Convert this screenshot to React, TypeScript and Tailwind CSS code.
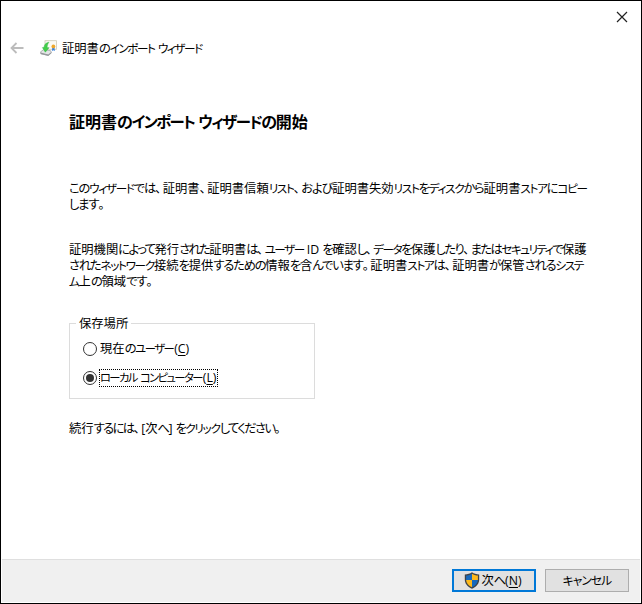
import React, { useState } from 'react';

type StoreLocation = 'user' | 'machine';

interface JaTextProps {
  text: string;
  hiragana?: string;
  katakana?: string;
  punctuation?: string;
}

interface LocationOptionProps {
  label: string;
  accessKey: string;
  checked: boolean;
  katakana: string;
  onSelect: () => void;
}

// Kana runs are set tighter than kanji, as in a UI typeface.
const JaText: React.FC<JaTextProps> = ({
  text,
  hiragana = 'tracking-[-1.2px]',
  katakana = 'text-[11.6px] tracking-[-1.3px]',
  punctuation = 'tracking-[1.5px]',
}) => (
  <>
    {text.split(/([\u3041-\u309f]+|[\u30a0-\u30ff]+|[\u3001\u3002])/).map((run, index) => {
      const style = /^[\u3041-\u309f]/.test(run)
        ? hiragana
        : /^[\u30a0-\u30ff]/.test(run)
          ? katakana
          : /^[\u3001\u3002]/.test(run)
            ? punctuation
            : '';

      return (
        <span key={index} className={style}>
          {run}
        </span>
      );
    })}
  </>
);

const CertificateIcon: React.FC = () => (
  <svg width="17" height="17" viewBox="0 0 17 17" aria-hidden="true">
    <rect x="5" y="0.7" width="11.4" height="8.6" fill="#fbfaf4" stroke="#cdc8b5" strokeWidth="0.8" />
    <path d="M12.3 7.500l-.4 3.600 1.500-.9 1.500.9-.4-3.600z" fill="#3b83dd" />
    <circle cx="13.4" cy="6.4" r="1.900" fill="#efa72b" />
    <path d="M.6 11.800l3-2.100 7 1 .8 1.600-3 3-7.700-1.500z" fill="#e3e5e6" stroke="#8b8f92" strokeWidth="0.6" />
    <path d="M.8 12.400v1.700l7.500 2 3.100-2.900v-1.200l-3.100 2.600z" fill="#96999c" />
    <path d="M9 2.200c-2.900.5-4.700 2-4.900 5L2.400 7.600l2.900 4.600 3.800-4.500-2-.2c.1-2.200.8-3.900 1.900-5.300z" fill="#43ce4a" stroke="#2db13f" strokeWidth="0.4" />
  </svg>
);

const ShieldIcon: React.FC = () => (
  <svg width="16" height="17" viewBox="0 0 16 17" className="shrink-0" aria-hidden="true">
    <path d="M8 .3C6 1.700 3.600 2.300.8 2.400v5.100c0 4.100 2.500 7.100 7.200 9.300 4.700-2.200 7.200-5.200 7.200-9.300V2.400C12.400 2.300 10 1.700 8 .3z" fill="#3f4347" />
    <path d="M8 1.800v6.200H2.100V3.600C4.300 3.500 6.300 2.900 8 1.800z" fill="#1769bd" />
    <path d="M8 1.800v6.200h5.900V3.600C11.700 3.500 9.700 2.900 8 1.800z" fill="#fdb91c" />
    <path d="M2.100 8H8v7.300C4.500 13.600 2.300 11.300 2.100 8z" fill="#fdb91c" />
    <path d="M13.900 8H8v7.300c3.500-1.700 5.700-4 5.900-7.300z" fill="#1769bd" />
  </svg>
);

const LocationOption: React.FC<LocationOptionProps> = ({ label, accessKey, checked, katakana, onSelect }) => (
  <button type="button" role="radio" aria-checked={checked} onClick={onSelect} className="flex h-[18px] items-center gap-[2px]">
    <span className="flex size-[14px] items-center justify-center rounded-full border border-[#333] bg-white">
      {checked && <span className="size-2 rounded-full bg-[#333]" />}
    </span>
    <span className={`flex h-[18px] items-center border pr-px whitespace-nowrap ${checked ? 'border-dotted border-black' : 'border-transparent'}`}>
      <span>
        <JaText text={label} katakana={katakana} />
        <span className="ml-px">(<u className="underline-offset-2">{accessKey}</u>)</span>
      </span>
    </span>
  </button>
);

const App: React.FC = () => {
  const [location, setLocation] = useState<StoreLocation>('machine');

  return (
    <div className="flex h-[604px] w-[642px] flex-col border border-black bg-white p-px font-['Open_Sans','Noto_Sans_CJK_JP',sans-serif] text-[12.3px] leading-4 text-black [font-feature-settings:'palt']">
      <header>
        <div className="flex h-[31px] items-center justify-end pr-3 pb-[2px]">
          <button type="button" aria-label="閉じる">
            <svg width="12" height="12" viewBox="0 0 12 12" fill="none" stroke="#222" strokeWidth="1.2">
              <path d="M1 1l10 10M11 1L1 11" />
            </svg>
          </button>
        </div>
        <div className="flex h-[30px] items-center pl-2">
          <svg width="14" height="12" viewBox="0 0 14 12" fill="none" stroke="#bcbcbc" strokeWidth="1.8" aria-hidden="true">
            <path d="M13.500 6H1.500M6.500 1L1.500 6l5 5" />
          </svg>
          <span className="ml-4">
            <CertificateIcon />
          </span>
          <span className="ml-[5px] pt-px whitespace-nowrap">
            <JaText text="証明書のインポート ウィザード" katakana="text-[11.6px] tracking-[-1.4px]" />
          </span>
        </div>
      </header>

      <main className="flex-1 pt-[47px] pl-[67px]">
        <h1 className="h-6 text-base leading-6 font-bold whitespace-nowrap">
          <JaText text="証明書のインポート ウィザードの開始" katakana="text-[15.4px] tracking-[-1.6px]" />
        </h1>

        <div className="mt-[47px] whitespace-nowrap">
          <p><JaText text="このウィザードでは、証明書、証明書信頼リスト、および証明書失効リストをディスクから証明書ストアにコピー" /></p>
          <p><JaText text="します。" /></p>
        </div>

        <div className="mt-[29px] whitespace-nowrap">
          <p><JaText text="証明機関によって発行された証明書は、ユーザー ID を確認し、データを保護したり、またはセキュリティで保護" hiragana="tracking-[-1.6px]" katakana="text-[11.6px] tracking-[-1.5px]" /></p>
          <p><JaText text="されたネットワーク接続を提供するための情報を含んでいます。証明書ストアは、証明書が保管されるシステ" /></p>
          <p><JaText text="ム上の領域です。" /></p>
        </div>

        <fieldset className="mt-6 h-[85px] w-[246px] border border-[#dcdcdc] pl-[13px]">
          <legend className="-ml-[7px] px-[3px] pt-[2px]"><JaText text="保存場所" /></legend>
          <div role="radiogroup" className="flex flex-col gap-[11px] pt-2">
            <LocationOption label="現在のユーザー" accessKey="C" katakana="text-[11.3px] tracking-[-1.5px]" checked={location === 'user'} onSelect={() => setLocation('user')} />
            <LocationOption label="ローカル コンピューター" accessKey="L" katakana="text-[11.3px] tracking-[-1.6px]" checked={location === 'machine'} onSelect={() => setLocation('machine')} />
          </div>
        </fieldset>

        <p className="mt-[22px] whitespace-nowrap">
          <JaText text="続行するには、[次へ] をクリックしてください。" hiragana="tracking-[-1.6px]" />
        </p>
      </main>

      <footer className="flex h-[43px] justify-end gap-[9px] border-t border-[#dfdfdf] bg-[#f0f0f0] pt-[9px] pr-[11px]">
        <button type="button" className="flex h-[23px] w-[84px] items-center justify-center border-2 border-[#0078d7] bg-[#e1e1e1] pr-[2px]">
          <ShieldIcon />
          <span className="ml-px whitespace-nowrap"><JaText text="次へ" />(<u className="underline-offset-2">N</u>)</span>
        </button>
        <button type="button" className="h-[23px] w-[84px] border border-[#adadad] bg-[#e1e1e1] whitespace-nowrap">
          <JaText text="キャンセル" katakana="text-[11.8px] tracking-[-1px]" />
        </button>
      </footer>
    </div>
  );
};

export default App;
